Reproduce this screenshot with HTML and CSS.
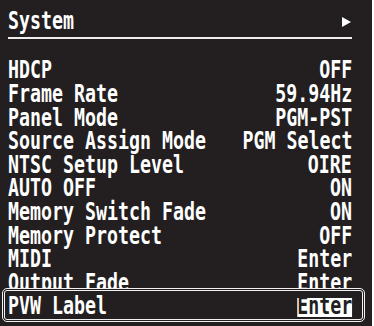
FILE: index.html
```html
<!DOCTYPE html>
<html lang="en">
<head>
    <meta charset="UTF-8">
    <meta name="viewport" content="width=device-width, initial-scale=1.0">
    <title>System Menu</title>
    <link rel="stylesheet" href="styles.css">
</head>
<body>

    <div class="screen">
        <div class="title">
            <span class="label">System</span>
            <span class="arrow"></span>
        </div>

        <ul class="menu">
            <li class="row"><span class="label">HDCP</span><span class="value">OFF</span></li>
            <li class="row"><span class="label">Frame Rate</span><span class="value">59.94Hz</span></li>
            <li class="row"><span class="label">Panel Mode</span><span class="value">PGM-PST</span></li>
            <li class="row"><span class="label">Source Assign Mode</span><span class="value">PGM Select</span></li>
            <li class="row"><span class="label">NTSC Setup Level</span><span class="value">OIRE</span></li>
            <li class="row"><span class="label">AUTO OFF</span><span class="value">ON</span></li>
            <li class="row"><span class="label">Memory Switch Fade</span><span class="value">ON</span></li>
            <li class="row"><span class="label">Memory Protect</span><span class="value">OFF</span></li>
            <li class="row"><span class="label">MIDI</span><span class="value">Enter</span></li>
            <li class="row"><span class="label">Output Fade</span><span class="value">Enter</span></li>
            <li class="row selected"><span class="label">PVW Label</span><span class="value">Enter</span></li>
        </ul>
    </div>

</body>
</html>
```

FILE: styles.css
```css
body {
    margin: 0;
    background: #fff;
}
.screen {
    width: 372px;
    height: 326px;
    overflow: hidden;
    background: #231f20;
    color: #fff;
    font-family: "DejaVu Sans Mono", monospace;
    font-weight: bold;
    font-size: 24px;
    line-height: 23.6px;
}
.title {
    display: flex;
    align-items: center;
    margin: 0 20px 0 8px;
    padding: 10px 0 3px;
    border-bottom: 2px solid #eee;
}
.label {
    flex: 1;
    min-width: 0;
    white-space: nowrap;
    transform: scaleX(0.761);
    transform-origin: left center;
}
.value {
    flex: none;
    white-space: nowrap;
    transform: scaleX(0.761);
    transform-origin: right center;
}
.arrow {
    width: 0;
    height: 0;
    margin-right: 1px;
    border-left: 9px solid #fff;
    border-top: 5px solid transparent;
    border-bottom: 5px solid transparent;
}
.menu {
    list-style: none;
    margin: 20.8px 0 0;
    padding: 0;
}
.row {
    display: flex;
    padding: 0 20px 0 8px;
}
.row.selected {
    position: relative;
    margin: -7.4px 7px 0 2px;
    padding: 4.4px 10px 0 3px;
    border: 3px double #f2f2f2;
    border-radius: 5px;
    background: #231f20;
}
.selected .value {
    color: #231f20;
    background: linear-gradient(#fff, #fff) 0 2.6px / 100% 19px no-repeat;
}
```
